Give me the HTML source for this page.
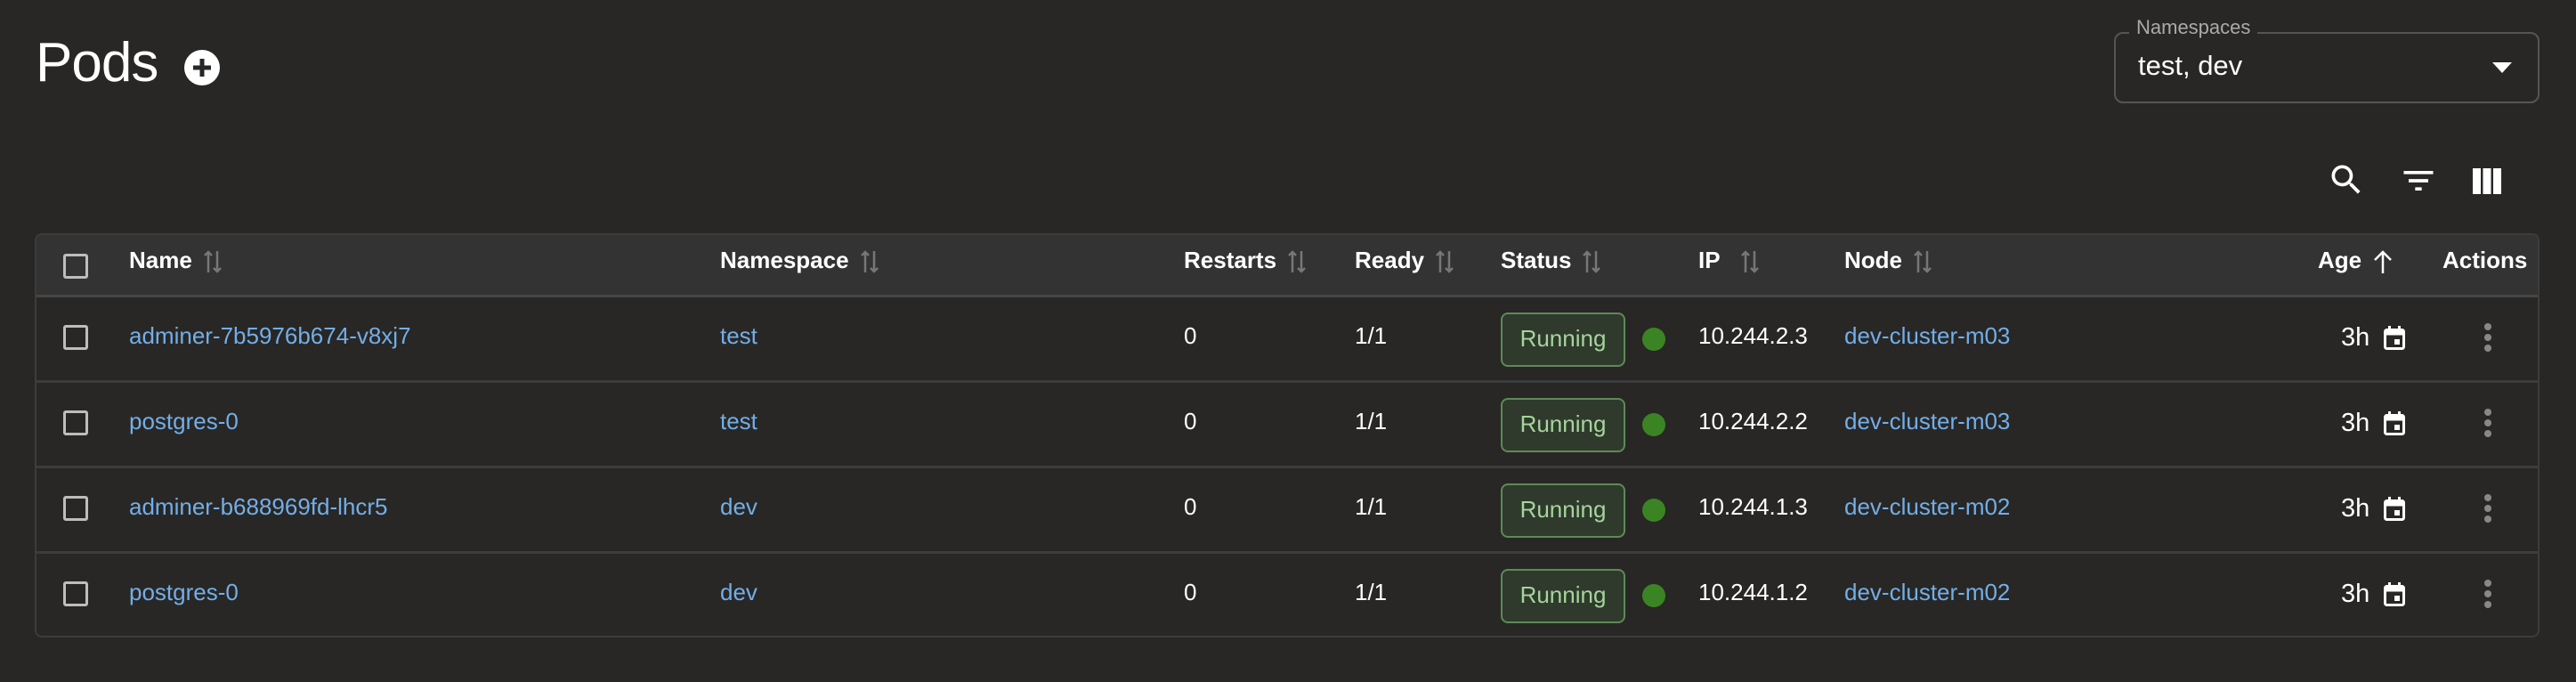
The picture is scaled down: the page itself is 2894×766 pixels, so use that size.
<!DOCTYPE html>
<html><head><meta charset="utf-8"><style>
*{margin:0;padding:0;box-sizing:border-box}
body{width:2894px;height:766px;background:#282725;font-family:"Liberation Sans",sans-serif;color:#fff;position:relative;overflow:hidden}
.a{position:absolute;white-space:nowrap}
.tbl{position:absolute;left:39px;top:262px;width:2814px;height:454px;border:2px solid #3c3c3c;border-radius:8px;overflow:hidden}
.hd{position:absolute;left:0;top:0;width:100%;height:70px;background:#333333;border-bottom:3px solid #464646}
.row{position:absolute;left:0;width:100%;height:96px;border-bottom:3px solid #3c3c3c}
.th{position:absolute;top:13px;font-size:26px;font-weight:bold;color:#fff}
.td{position:absolute;top:28px;font-size:26px;color:#fff}
.lk{color:#73aee8}
.cb{position:absolute;left:30px;width:28px;height:28px;border:3px solid #bdbdbd;border-radius:3px}
.row .cb{top:31px!important}
.chip{position:absolute;left:1645px;top:17px;width:140px;height:61px;border:2px solid #5d8a56;border-radius:8px;background:#2f3a2d;color:#a6d49c;font-size:26px;text-align:center;line-height:54px}
.dot{position:absolute;left:1804px;top:34px;width:26px;height:26px;border-radius:50%;background:#3b8424}
.srt{display:inline-block;vertical-align:middle;margin-left:12px}
</style></head><body>
<div class="a" style="left:40px;top:35px;font-size:62px;letter-spacing:-1px">Pods</div>
<svg class="a" style="left:207px;top:56px" width="40" height="40" viewBox="0 0 40 40"><circle cx="20" cy="20" r="20" fill="#fff"/><path d="M20 10v20M10 20h20" stroke="#282725" stroke-width="5"/></svg>

<div class="a" style="left:2375px;top:36px;width:478px;height:80px;border:2px solid #555;border-radius:10px"></div>
<div class="a" style="left:2392px;top:18px;padding:0 8px;background:#282725;color:#aaa;font-size:22px">Namespaces</div>
<div class="a" style="left:2402px;top:56px;font-size:31px">test, dev</div>
<svg class="a" style="left:2800px;top:70px" width="22" height="12" viewBox="0 0 22 12"><path d="M0 0h22L11 12z" fill="#fff"/></svg>

<svg class="a" style="left:2614px;top:180px" width="44" height="44" viewBox="0 0 24 24"><path d="M15.5 14h-.79l-.28-.27A6.470 6.47 0 0016 9.5 6.5 6.5 0 109.5 16c1.61 0 3.09-.59 4.23-1.57l.27.28v.79l5 4.990L20.49 19l-4.99-5zm-6 0C7.01 14 5 11.99 5 9.5S7.01 5 9.5 5 14 7.01 14 9.5 11.99 14 9.5 14z" fill="#fff"/></svg>
<svg class="a" style="left:2695px;top:181px" width="44" height="44" viewBox="0 0 24 24"><path d="M10 18h4v-2h-4v2zM3 6v2h18V6H3zm3 7h12v-2H6v2z" fill="#fff"/></svg>
<svg class="a" style="left:2778px;top:189px" width="32" height="29" viewBox="0 0 32 29"><rect x="0" y="0" width="9" height="29" fill="#fff"/><rect x="11.5" y="0" width="9" height="29" fill="#fff"/><rect x="23" y="0" width="9" height="29" fill="#fff"/></svg>

<div class="tbl">
<div class="hd">
<div class="cb" style="top:21px"></div>
<div class="th" style="left:104px">Name<svg class="srt" width="22" height="28" viewBox="0 0 22 28"><path d="M6 26V3M2 7l4-4 4 4M16 2v23M12 21l4 4 4-4" stroke="#777" stroke-width="2.5" fill="none"/></svg></div>
<div class="th" style="left:768px">Namespace<svg class="srt" width="22" height="28" viewBox="0 0 22 28"><path d="M6 26V3M2 7l4-4 4 4M16 2v23M12 21l4 4 4-4" stroke="#777" stroke-width="2.5" fill="none"/></svg></div>
<div class="th" style="left:1289px">Restarts<svg class="srt" width="22" height="28" viewBox="0 0 22 28"><path d="M6 26V3M2 7l4-4 4 4M16 2v23M12 21l4 4 4-4" stroke="#777" stroke-width="2.5" fill="none"/></svg></div>
<div class="th" style="left:1481px">Ready<svg class="srt" width="22" height="28" viewBox="0 0 22 28"><path d="M6 26V3M2 7l4-4 4 4M16 2v23M12 21l4 4 4-4" stroke="#777" stroke-width="2.5" fill="none"/></svg></div>
<div class="th" style="left:1645px">Status<svg class="srt" width="22" height="28" viewBox="0 0 22 28"><path d="M6 26V3M2 7l4-4 4 4M16 2v23M12 21l4 4 4-4" stroke="#777" stroke-width="2.5" fill="none"/></svg></div>
<div class="th" style="left:1867px">IP<svg class="srt" style="margin-left:22px" width="22" height="28" viewBox="0 0 22 28"><path d="M6 26V3M2 7l4-4 4 4M16 2v23M12 21l4 4 4-4" stroke="#777" stroke-width="2.5" fill="none"/></svg></div>
<div class="th" style="left:2031px">Node<svg class="srt" width="22" height="28" viewBox="0 0 22 28"><path d="M6 26V3M2 7l4-4 4 4M16 2v23M12 21l4 4 4-4" stroke="#777" stroke-width="2.5" fill="none"/></svg></div>
<div class="th" style="left:2563px">Age<svg class="srt" width="24" height="28" viewBox="0 0 24 28"><path d="M12 27V3M3 12l9-9 9 9" stroke="#fff" stroke-width="2.5" fill="none"/></svg></div>
<div class="th" style="left:2703px">Actions</div>
</div>

<div class="row" style="top:70px">
<div class="cb"></div>
<div class="td lk" style="left:104px">adminer-7b5976b674-v8xj7</div>
<div class="td lk" style="left:768px">test</div>
<div class="td" style="left:1289px">0</div><div class="td" style="left:1481px">1/1</div>
<div class="chip">Running</div><div class="dot"></div>
<div class="td" style="left:1867px">10.244.2.3</div>
<div class="td lk" style="left:2031px">dev-cluster-m03</div>
<div class="td" style="left:2589px;top:29px;font-size:29px">3h</div>
<svg class="a" style="left:2637px;top:32px" width="24" height="27" viewBox="0 0 24 27"><rect x="1.5" y="4.5" width="21" height="21" rx="2" fill="none" stroke="#fff" stroke-width="3"/><rect x="1.5" y="4.5" width="21" height="6" fill="#fff"/><rect x="5" y="0" width="3" height="5" fill="#fff"/><rect x="16" y="0" width="3" height="5" fill="#fff"/><rect x="12" y="15" width="6" height="6" fill="#fff"/></svg>
<svg class="a" style="left:2749px;top:28px" width="10" height="36" viewBox="0 0 10 36"><circle cx="5" cy="5" r="4" fill="#888"/><circle cx="5" cy="17" r="4" fill="#888"/><circle cx="5" cy="29" r="4" fill="#888"/></svg>
</div>

<div class="row" style="top:166px">
<div class="cb"></div>
<div class="td lk" style="left:104px">postgres-0</div>
<div class="td lk" style="left:768px">test</div>
<div class="td" style="left:1289px">0</div><div class="td" style="left:1481px">1/1</div>
<div class="chip">Running</div><div class="dot"></div>
<div class="td" style="left:1867px">10.244.2.2</div>
<div class="td lk" style="left:2031px">dev-cluster-m03</div>
<div class="td" style="left:2589px;top:29px;font-size:29px">3h</div>
<svg class="a" style="left:2637px;top:32px" width="24" height="27" viewBox="0 0 24 27"><rect x="1.5" y="4.5" width="21" height="21" rx="2" fill="none" stroke="#fff" stroke-width="3"/><rect x="1.5" y="4.5" width="21" height="6" fill="#fff"/><rect x="5" y="0" width="3" height="5" fill="#fff"/><rect x="16" y="0" width="3" height="5" fill="#fff"/><rect x="12" y="15" width="6" height="6" fill="#fff"/></svg>
<svg class="a" style="left:2749px;top:28px" width="10" height="36" viewBox="0 0 10 36"><circle cx="5" cy="5" r="4" fill="#888"/><circle cx="5" cy="17" r="4" fill="#888"/><circle cx="5" cy="29" r="4" fill="#888"/></svg>
</div>

<div class="row" style="top:262px">
<div class="cb"></div>
<div class="td lk" style="left:104px">adminer-b688969fd-lhcr5</div>
<div class="td lk" style="left:768px">dev</div>
<div class="td" style="left:1289px">0</div><div class="td" style="left:1481px">1/1</div>
<div class="chip">Running</div><div class="dot"></div>
<div class="td" style="left:1867px">10.244.1.3</div>
<div class="td lk" style="left:2031px">dev-cluster-m02</div>
<div class="td" style="left:2589px;top:29px;font-size:29px">3h</div>
<svg class="a" style="left:2637px;top:32px" width="24" height="27" viewBox="0 0 24 27"><rect x="1.5" y="4.5" width="21" height="21" rx="2" fill="none" stroke="#fff" stroke-width="3"/><rect x="1.5" y="4.5" width="21" height="6" fill="#fff"/><rect x="5" y="0" width="3" height="5" fill="#fff"/><rect x="16" y="0" width="3" height="5" fill="#fff"/><rect x="12" y="15" width="6" height="6" fill="#fff"/></svg>
<svg class="a" style="left:2749px;top:28px" width="10" height="36" viewBox="0 0 10 36"><circle cx="5" cy="5" r="4" fill="#888"/><circle cx="5" cy="17" r="4" fill="#888"/><circle cx="5" cy="29" r="4" fill="#888"/></svg>
</div>

<div class="row" style="top:358px;border-bottom:none">
<div class="cb"></div>
<div class="td lk" style="left:104px">postgres-0</div>
<div class="td lk" style="left:768px">dev</div>
<div class="td" style="left:1289px">0</div><div class="td" style="left:1481px">1/1</div>
<div class="chip">Running</div><div class="dot"></div>
<div class="td" style="left:1867px">10.244.1.2</div>
<div class="td lk" style="left:2031px">dev-cluster-m02</div>
<div class="td" style="left:2589px;top:29px;font-size:29px">3h</div>
<svg class="a" style="left:2637px;top:32px" width="24" height="27" viewBox="0 0 24 27"><rect x="1.5" y="4.5" width="21" height="21" rx="2" fill="none" stroke="#fff" stroke-width="3"/><rect x="1.5" y="4.5" width="21" height="6" fill="#fff"/><rect x="5" y="0" width="3" height="5" fill="#fff"/><rect x="16" y="0" width="3" height="5" fill="#fff"/><rect x="12" y="15" width="6" height="6" fill="#fff"/></svg>
<svg class="a" style="left:2749px;top:28px" width="10" height="36" viewBox="0 0 10 36"><circle cx="5" cy="5" r="4" fill="#888"/><circle cx="5" cy="17" r="4" fill="#888"/><circle cx="5" cy="29" r="4" fill="#888"/></svg>
</div>
</div>
</body></html>
